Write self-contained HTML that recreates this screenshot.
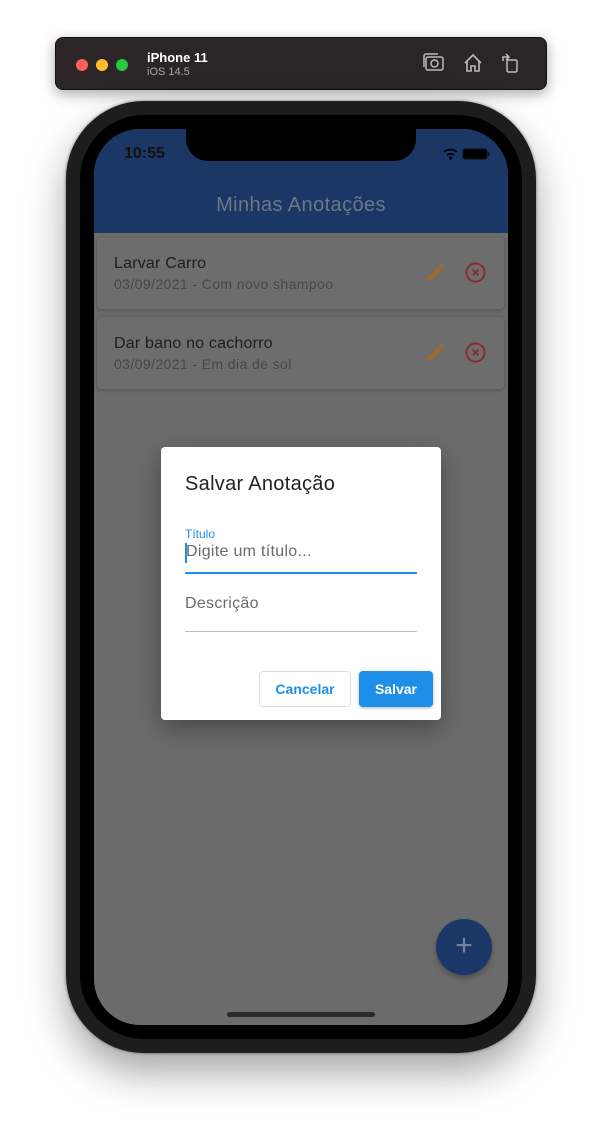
<!DOCTYPE html>
<html><head><meta charset="utf-8"><style>
*{margin:0;padding:0;box-sizing:border-box}
body{width:602px;height:1128px;background:#fff;position:relative;overflow:hidden;font-family:"Liberation Sans",sans-serif}
.abs{position:absolute}
.bar{left:55px;top:37px;width:492px;height:53px;background:#2b2527;border-radius:8px;box-shadow:0 4px 14px rgba(0,0,0,.35);border:1px solid #111}
.dot{width:12px;height:12px;border-radius:50%;top:21px}
.phone{left:66px;top:101px;width:470px;height:952px;border-radius:78px;background:#1d1d1d;box-shadow:0 20px 40px rgba(0,0,0,.35),0 0 3px rgba(0,0,0,.5)}
.bezel{left:80px;top:115px;width:442px;height:924px;border-radius:64px;background:#000}
.screen{left:94px;top:129px;width:414px;height:896px;border-radius:46px;background:#6b6b6b;overflow:hidden}
.card{left:3px;width:407px;height:72px;background:#6d6d6d;border-radius:4px;box-shadow:0 1px 3px rgba(0,0,0,.3)}
.t{color:#1e1e1e;font-size:16px;letter-spacing:.2px}
.s{color:#474747;font-size:14px;letter-spacing:.4px}
</style></head><body>
<div class="abs bar">
 <div class="abs dot" style="left:20px;background:#fe5f57"></div>
 <div class="abs dot" style="left:40px;background:#febc2e"></div>
 <div class="abs dot" style="left:60px;background:#28c840"></div>
 <div class="abs" style="left:91px;top:12px;color:#fff;font-weight:bold;font-size:13px">iPhone 11</div>
 <div class="abs" style="left:91px;top:28px;color:#a8a8a8;font-size:11px">iOS 14.5</div>
 <svg class="abs" style="left:366px;top:14px" width="24" height="22" viewBox="0 0 24 22" fill="none" stroke="#bbb" stroke-width="1.5"><rect x="4" y="5" width="17" height="13" rx="2"/><path d="M2 15V4a2 2 0 0 1 2-2h12"/><circle cx="12.5" cy="11.5" r="3.5"/></svg>
 <svg class="abs" style="left:406px;top:14px" width="22" height="22" viewBox="0 0 22 22" fill="none" stroke="#bbb" stroke-width="1.6"><path d="M3 11L11 3l8 8M5 9v10h4v-5h4v5h4V9"/></svg>
 <svg class="abs" style="left:444px;top:14px" width="20" height="22" viewBox="0 0 20 22" fill="none" stroke="#bbb" stroke-width="1.5"><rect x="7" y="8" width="10" height="12" rx="1.5"/><path d="M3 9V5h6M6 2L9 5 6 8"/></svg>
</div>
<div class="abs phone"></div>
<div class="abs bezel"></div>
<div class="abs screen">
 <div class="abs" style="left:0;top:0;width:414px;height:104px;background:#1a3766"></div>
 <div class="abs" style="left:30px;top:16px;font-size:16px;font-weight:bold;color:#101010">10:55</div>
 <div class="abs" style="left:92px;top:-2px;width:230px;height:34px;background:#000;border-radius:0 0 22px 22px"></div>
 <svg class="abs" style="left:326px;top:18px" width="80" height="14"><g fill="#333"><circle cx="2" cy="8" r="1.2"/><circle cx="6" cy="8" r="1.2"/><circle cx="10" cy="8" r="1.2"/><circle cx="14" cy="8" r="1.2"/></g><path d="M24 5a10 10 0 0 1 13 0M27 8a6 6 0 0 1 7 0" stroke="#000" stroke-width="1.8" fill="none"/><circle cx="30.5" cy="11" r="1.6" fill="#000"/><rect x="43" y="2" width="24" height="10" rx="2.5" fill="#000" stroke="#111"/><rect x="68" y="5" width="1.5" height="4" fill="#111"/></svg>
 <div class="abs" style="left:0;top:65px;width:414px;text-align:center;font-size:20px;color:#6e7786;letter-spacing:.4px">Minhas Anotações</div>
 <div class="abs card" style="top:108px"><div class="abs t" style="left:17px;top:18px">Larvar Carro</div><div class="abs s" style="left:17px;top:39px">03/09/2021 - Com novo shampoo</div></div>
 <div class="abs card" style="top:188px"><div class="abs t" style="left:17px;top:18px">Dar bano no cachorro</div><div class="abs s" style="left:17px;top:39px">03/09/2021 - Em dia de sol</div></div>
 <svg class="abs" style="left:331px;top:132px" width="22" height="22" viewBox="0 0 24 24"><path fill="#a06a30" d="M3 17.25V21h3.75L17.8 9.94l-3.75-3.75L3 17.25zM20.7 7.04a1 1 0 0 0 0-1.41l-2.34-2.34a1 1 0 0 0-1.410 0l-1.83 1.83 3.75 3.75 1.83-1.83z"/></svg>
 <svg class="abs" style="left:370px;top:132px" width="23" height="23" viewBox="0 0 24 24" fill="none" stroke="#8a2a2a" stroke-width="2"><circle cx="12" cy="12" r="9.5"/><path d="M9 9l6 6M15 9l-6 6"/></svg>
 <svg class="abs" style="left:331px;top:212px" width="22" height="22" viewBox="0 0 24 24"><path fill="#a06a30" d="M3 17.25V21h3.75L17.8 9.94l-3.75-3.75L3 17.25zM20.7 7.04a1 1 0 0 0 0-1.41l-2.34-2.34a1 1 0 0 0-1.41 0l-1.83 1.83 3.75 3.75 1.83-1.83z"/></svg>
 <svg class="abs" style="left:370px;top:212px" width="23" height="23" viewBox="0 0 24 24" fill="none" stroke="#8a2a2a" stroke-width="2"><circle cx="12" cy="12" r="9.5"/><path d="M9 9l6 6M15 9l-6 6"/></svg>
 <div class="abs" style="left:342px;top:790px;width:56px;height:56px;border-radius:50%;background:#1a3766;box-shadow:0 3px 6px rgba(0,0,0,.3);color:#7b8598;font-size:30px;text-align:center;line-height:54px">+</div>
 <div class="abs" style="left:133px;top:883px;width:148px;height:5px;border-radius:3px;background:#2a2a2a"></div>
</div>
<div class="abs" style="left:161px;top:447px;width:280px;height:273px;background:#fff;border-radius:4px;box-shadow:0 8px 24px rgba(0,0,0,.35)">
 <div class="abs" style="left:24px;top:26px;font-size:20px;color:#222;letter-spacing:.3px">Salvar Anotação</div>
 <div class="abs" style="left:24px;top:80px;font-size:12px;color:#1e8fe8">Título</div>
 <div class="abs" style="left:24px;top:96px;width:2px;height:20px;background:#1e8fe8"></div>
 <div class="abs" style="left:25px;top:96px;font-size:16px;color:#6b6b6b;letter-spacing:.3px">Digite um título...</div>
 <div class="abs" style="left:24px;top:125px;width:232px;height:2px;background:#1e8fe8"></div>
 <div class="abs" style="left:24px;top:148px;font-size:16px;color:#6b6b6b;letter-spacing:.3px">Descrição</div>
 <div class="abs" style="left:24px;top:184px;width:232px;height:1px;background:#bbb"></div>
 <div class="abs" style="left:98px;top:224px;width:92px;height:36px;border:1px solid #ddd;border-radius:4px;text-align:center;line-height:34px;font-size:14px;font-weight:bold;color:#1e8fe8">Cancelar</div>
 <div class="abs" style="left:198px;top:224px;width:74px;height:36px;background:#1e8fe8;border-radius:4px;text-align:center;line-height:36px;font-size:14px;font-weight:bold;color:#fff;box-shadow:0 1px 3px rgba(0,0,0,.3)">Salvar</div>
</div>
</body></html>
